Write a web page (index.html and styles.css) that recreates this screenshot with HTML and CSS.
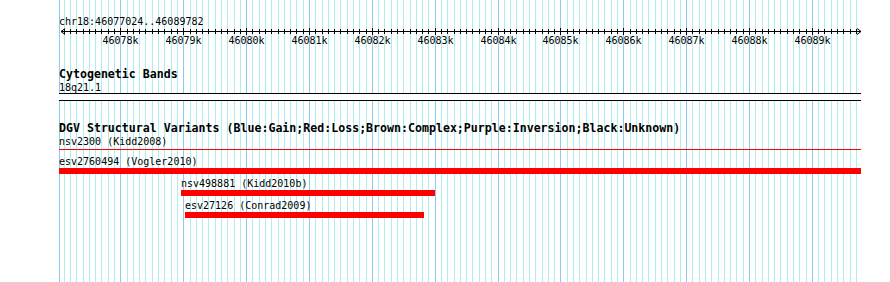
FILE: index.html
```html
<!DOCTYPE html>
<html lang="en">
<head>
    <meta charset="UTF-8">
    <title>chr18:46077024..46089782</title>
    <link rel="stylesheet" href="styles.css">
</head>
<body>
    <div class="browser">
        <svg class="grid" id="grid" width="890" height="282"></svg>

        <div class="tracks">
            <div class="position">chr18:46077024..46089782</div>
            <svg class="ruler" id="ruler" width="804" height="20"></svg>

            <section class="track">
                <h2 class="track-title">Cytogenetic Bands</h2>
                <div class="feature-label">18q21.1</div>
                <div class="band"></div>
            </section>

            <section class="track">
                <h2 class="track-title">DGV Structural Variants (Blue:Gain;Red:Loss;Brown:Complex;Purple:Inversion;Black:Unknown)</h2>
                <div class="feature">
                    <div class="feature-label">nsv2300 (Kidd2008)</div>
                    <div class="line"></div>
                </div>
                <div class="feature">
                    <div class="feature-label">esv2760494 (Vogler2010)</div>
                    <div class="bar"></div>
                </div>
                <div class="feature" style="margin-left: 122px">
                    <div class="feature-label">nsv498881 (Kidd2010b)</div>
                    <div class="bar" style="width: 254px"></div>
                </div>
                <div class="feature" style="margin-left: 126px">
                    <div class="feature-label">esv27126 (Conrad2009)</div>
                    <div class="bar" style="width: 239px"></div>
                </div>
            </section>
        </div>
    </div>

    <script>
        const START = 46077024;
        const END = 46089782;
        const LEFT = 59;
        const WIDTH = 802;
        const NS = 'http://www.w3.org/2000/svg';
        const scale = WIDTH / (END - START);
        const toX = (p) => Math.round(LEFT + (p - START) * scale);

        const add = (parent, tag, attrs) => {
            const el = document.createElementNS(NS, tag);
            for (const key in attrs) el.setAttribute(key, attrs[key]);
            parent.appendChild(el);
            return el;
        };

        const grid = document.getElementById('grid');
        const ruler = document.getElementById('ruler');

        // left edge of the panel
        add(grid, 'line', { x1: LEFT + 0.5, x2: LEFT + 0.5, y1: 0, y2: 282, class: 'major' });

        for (let p = Math.ceil(START / 100) * 100; p < END; p += 100) {
            const x = toX(p);
            const major = p % 1000 === 0;
            add(grid, 'line', { x1: x + 0.5, x2: x + 0.5, y1: 0, y2: 282, class: major ? 'major' : 'minor' });

            // ruler ticks (coords local to the track column)
            const lx = x - LEFT + 0.5;
            add(ruler, 'line', { x1: lx, x2: lx, y1: major ? 1 : 2, y2: major ? 8 : 7, class: 'tick' });
            if (major) {
                const label = add(ruler, 'text', { x: lx, y: 17, class: 'tick-label' });
                label.textContent = (p / 1000) + 'k';
            }
        }

        // axis with arrows at both ends
        add(ruler, 'line', { x1: 2, x2: 802, y1: 4.5, y2: 4.5, class: 'tick' });
        add(ruler, 'polyline', { points: '6,1.5 2,4.5 6,7.5', class: 'arrow' });
        add(ruler, 'polyline', { points: '798,1.5 802,4.5 798,7.5', class: 'arrow' });
    </script>
</body>
</html>
```

FILE: styles.css
```css
body {
    margin: 0;
    background-color: #fff;
    color: #000;
    font-family: 'DejaVu Sans Mono', monospace;
    font-size: 10px;
}

.browser {
    position: relative;
    width: 890px;
    height: 282px;
    overflow: hidden;
}

.grid {
    position: absolute;
    top: 0;
    left: 0;
}

.grid .minor {
    stroke: #aeeeee;
    stroke-width: 1;
}

.grid .major {
    stroke: #8ccbef;
    stroke-width: 1;
}

.tracks {
    position: relative;
    margin-left: 59px;
    width: 802px;
    padding-top: 14px;
}

/* line-height 15 inside a 13px box puts the baseline 1px lower */
.position {
    line-height: 15px;
    height: 13px;
}

.ruler {
    display: block;
    overflow: visible;
}

.ruler .tick {
    stroke: #000;
    stroke-width: 1;
}

.ruler .arrow {
    fill: none;
    stroke: #000;
    stroke-width: 1;
}

.ruler .tick-label {
    font-family: 'DejaVu Sans Mono', monospace;
    font-size: 10px;
    text-anchor: middle;
    fill: #000;
}

.track {
    margin-top: 20px;
}

.track-title {
    margin: 0;
    font-size: 11.6px;
    font-weight: bold;
    line-height: 15px;
    height: 13px;
    white-space: nowrap;
}

.feature-label {
    line-height: 15px;
    height: 13px;
    white-space: nowrap;
}

.band {
    height: 6px;
    background-color: #fff;
    border-top: 1px solid #000;
    border-bottom: 1px solid #000;
}

.feature {
    margin-bottom: 2px;
}

.line {
    height: 1px;
    margin: 2px 0 4px;
    background-color: #f00;
}

.bar {
    height: 6px;
    margin-top: 1px;
    background-color: #f00;
}
```
